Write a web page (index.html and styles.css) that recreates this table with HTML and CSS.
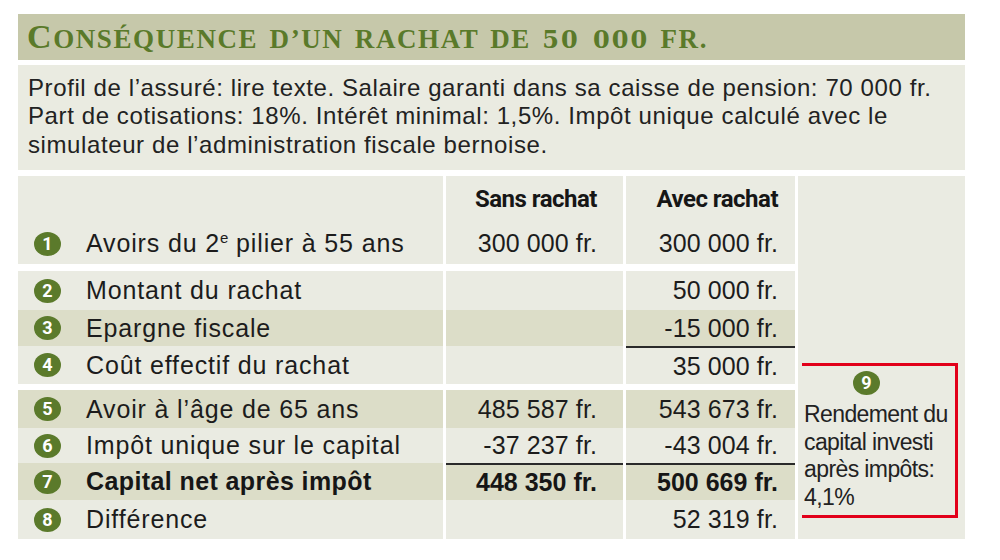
FILE: index.html
```html
<!DOCTYPE html>
<html lang="fr">
<head>
<meta charset="utf-8">
<title>Conséquence d’un rachat de 50 000 fr.</title>
<link rel="stylesheet" href="styles.css">
</head>
<body>
<div class="card">
  <h1 class="title"><span class="cap">C</span><span class="sc">ONSÉQUENCE D’UN RACHAT DE <span class="digits">50 000</span> FR.</span></h1>
  <p class="intro">Profil de l’assuré: lire texte. Salaire garanti dans sa caisse de pension: 70 000 fr.<br>Part de cotisations: 18%. Intérêt minimal: 1,5%. Impôt unique calculé avec le<br>simulateur de l’administration fiscale bernoise.</p>
  <div class="grid">
    <div class="side">
      <div class="callout">
        <span class="badge badge-side">9</span>
        <p class="callout-text">Rendement du<br>capital investi<br>après impôts:<br>4,1%</p>
      </div>
    </div>

    <div class="cell label head-row"></div>
    <div class="cell num n2 head head-row">Sans rachat</div>
    <div class="cell num n3 head head-row">Avec rachat</div>

    <div class="cell label first-row"><span class="badge">1</span><span class="txt">Avoirs du 2<span class="sup">e</span> pilier à 55 ans</span></div>
    <div class="cell num n2 first-row">300 000 fr.</div>
    <div class="cell num n3 first-row">300 000 fr.</div>

    <div class="spacer"></div>

    <div class="cell label"><span class="badge">2</span><span class="txt">Montant du rachat</span></div>
    <div class="cell num n2"></div>
    <div class="cell num n3">50 000 fr.</div>

    <div class="cell label shade"><span class="badge">3</span><span class="txt">Epargne fiscale</span></div>
    <div class="cell num n2 shade"></div>
    <div class="cell num n3 shade">-15 000 fr.</div>

    <div class="cell label"><span class="badge">4</span><span class="txt">Coût effectif du rachat</span></div>
    <div class="cell num n2"></div>
    <div class="cell num n3 rule">35 000 fr.</div>

    <div class="spacer"></div>

    <div class="cell label shade"><span class="badge">5</span><span class="txt">Avoir à l’âge de 65 ans</span></div>
    <div class="cell num n2 shade">485 587 fr.</div>
    <div class="cell num n3 shade">543 673 fr.</div>

    <div class="cell label"><span class="badge">6</span><span class="txt">Impôt unique sur le capital</span></div>
    <div class="cell num n2">-37 237 fr.</div>
    <div class="cell num n3">-43 004 fr.</div>

    <div class="cell label shade bold"><span class="badge">7</span><span class="txt">Capital net après impôt</span></div>
    <div class="cell num n2 shade bold rule">448 350 fr.</div>
    <div class="cell num n3 shade bold rule">500 669 fr.</div>

    <div class="cell label"><span class="badge">8</span><span class="txt">Différence</span></div>
    <div class="cell num n2"></div>
    <div class="cell num n3">52 319 fr.</div>
  </div>
</div>
</body>
</html>
```
FILE: styles.css
```css
html, body {
  margin: 0;
  padding: 0;
  background: #ffffff;
}

.card {
  width: 947px;
  margin: 14px 0 0 18px;
  font-family: "Liberation Sans", Arial, sans-serif;
  color: #1c1c1c;
}

.title {
  margin: 0;
  height: 46px;
  box-sizing: border-box;
  padding-left: 9px;
  background: #c6c8aa;
  font-family: "Liberation Serif", "Times New Roman", serif;
  font-size: 27px;
  font-weight: 700;
  color: #5a7a2a;
  line-height: 45px;
  white-space: nowrap;
  overflow: hidden;
}

.cap {
  font-size: 34px;
  letter-spacing: 1.6px;
}

.sc {
  font-size: 27px;
  letter-spacing: 1.6px;
  word-spacing: 3px;
}

.digits {
  font-family: "DejaVu Serif", "Liberation Serif", serif;
  font-size: 24px;
  letter-spacing: 2px;
  word-spacing: 3px;
}

.intro {
  margin: 5px 0 0;
  height: 105px;
  box-sizing: border-box;
  padding: 9px 0 0 10px;
  background: #eaebe1;
  font-size: 24px;
  line-height: 28.3px;
  letter-spacing: 0.6px;
  color: #222222;
  white-space: nowrap;
}

.grid {
  margin-top: 6px;
  display: grid;
  grid-template-columns: 425px 177px 169px 167px;
  grid-template-rows: 45px 43px 7px 39px 36px 38px 6px 38px 35px 37px 39px;
  column-gap: 3px;
  font-size: 25px;
}

.cell {
  background: #eaebe2;
  display: flex;
  align-items: center;
  box-sizing: border-box;
  white-space: nowrap;
}

.cell.shade {
  background: #dcddc8;
}

.first-row {
  padding-top: 2px;
}

.spacer {
  grid-column: 1 / span 3;
}

.label {
  padding-left: 16px;
  letter-spacing: 0.85px;
}

.label .txt {
  margin-left: 25px;
}

.num {
  justify-content: flex-end;
  letter-spacing: 0.1px;
}

.n2 {
  padding-right: 26px;
}

.n3 {
  padding-right: 17px;
}

.head {
  font-family: Roboto, "Liberation Sans", sans-serif;
  font-weight: 700;
  font-size: 24px;
  letter-spacing: -0.5px;
  color: #161616;
}

.bold {
  font-weight: 700;
  color: #161616;
}

.label.bold {
  letter-spacing: 0.4px;
}

.num.bold {
  letter-spacing: 0;
}

.rule {
  border-top: 2px solid #2a2a2a;
}

.sup {
  font-size: 15px;
  vertical-align: 9px;
  line-height: 0;
  letter-spacing: 0;
}

.badge {
  flex: none;
  width: 27px;
  height: 24px;
  border-radius: 50%;
  background: #5b7a2b;
  color: #ffffff;
  font-family: Roboto, "Liberation Sans", sans-serif;
  font-weight: 700;
  font-size: 18px;
  letter-spacing: 0;
  line-height: 24px;
  text-align: center;
}

.side {
  grid-column: 4;
  grid-row: 1 / -1;
  background: #eaebe2;
  padding-top: 187px;
  padding-left: 4px;
  box-sizing: border-box;
}

.callout {
  width: 156px;
  height: 155px;
  box-sizing: border-box;
  border-top: 3px solid #e2001a;
  border-right: 3px solid #e2001a;
  border-bottom: 3px solid #e2001a;
  padding: 5px 0 0 2px;
  display: flex;
  flex-direction: column;
  align-items: flex-start;
}

.badge-side {
  display: block;
  margin-left: 49px;
}

.callout-text {
  margin: 6px 0 0;
  font-size: 23px;
  line-height: 27.7px;
  letter-spacing: -0.6px;
  color: #222222;
  white-space: nowrap;
}
```
